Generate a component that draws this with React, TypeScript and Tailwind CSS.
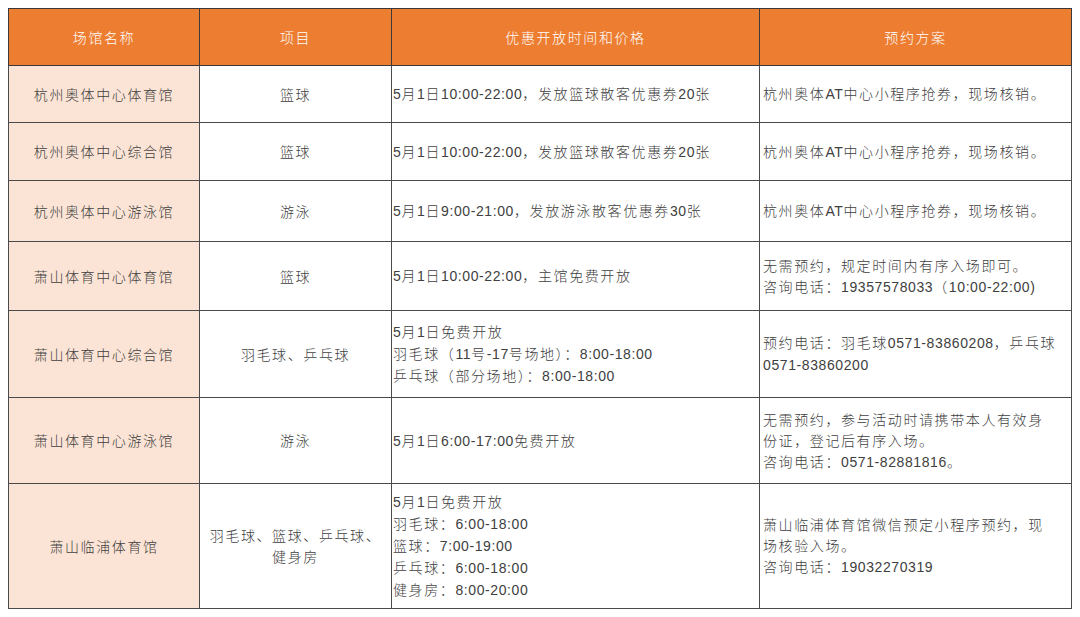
const venues = [
  {
    name: "杭州奥体中心体育馆",
    sport: ["篮球"],
    time: ["5月1日10:00-22:00，发放篮球散客优惠券20张"],
    plan: ["杭州奥体AT中心小程序抢券，现场核销。"],
    h: "h-[57px]",
  },
  {
    name: "杭州奥体中心综合馆",
    sport: ["篮球"],
    time: ["5月1日10:00-22:00，发放篮球散客优惠券20张"],
    plan: ["杭州奥体AT中心小程序抢券，现场核销。"],
    h: "h-[58px]",
  },
  {
    name: "杭州奥体中心游泳馆",
    sport: ["游泳"],
    time: ["5月1日9:00-21:00，发放游泳散客优惠券30张"],
    plan: ["杭州奥体AT中心小程序抢券，现场核销。"],
    h: "h-[61px]",
  },
  {
    name: "萧山体育中心体育馆",
    sport: ["篮球"],
    time: ["5月1日10:00-22:00，主馆免费开放"],
    plan: ["无需预约，规定时间内有序入场即可。", "咨询电话：19357578033（10:00-22:00)"],
    h: "h-[69px]",
  },
  {
    name: "萧山体育中心综合馆",
    sport: ["羽毛球、乒乓球"],
    time: ["5月1日免费开放", "羽毛球（11号-17号场地）：8:00-18:00", "乒乓球（部分场地）：8:00-18:00"],
    plan: ["预约电话：羽毛球0571-83860208，乒乓球", "0571-83860200"],
    h: "h-[87px]",
  },
  {
    name: "萧山体育中心游泳馆",
    sport: ["游泳"],
    time: ["5月1日6:00-17:00免费开放"],
    plan: ["无需预约，参与活动时请携带本人有效身", "份证，登记后有序入场。", "咨询电话：0571-82881816。"],
    h: "h-[86px]",
  },
  {
    name: "萧山临浦体育馆",
    sport: ["羽毛球、篮球、乒乓球、", "健身房"],
    time: ["5月1日免费开放", "羽毛球：6:00-18:00", "篮球：7:00-19:00", "乒乓球：6:00-18:00", "健身房：8:00-20:00"],
    plan: ["萧山临浦体育馆微信预定小程序预约，现", "场核验入场。", "咨询电话：19032270319"],
    h: "h-[125px]",
  },
];

// latin runs get a narrower face than the CJK text around them
function Mixed({ text }: { text: string }) {
  const parts = text.split(/([0-9A-Za-z:\-()]+)/);
  return (
    <>
      {parts.map((p, i) =>
        i % 2 === 1 ? (
          <span key={i} className="font-['Liberation_Sans',sans-serif] tracking-[0.6px]">
            {p}
          </span>
        ) : (
          p
        )
      )}
    </>
  );
}

function Lines({ lines }: { lines: string[] }) {
  return (
    <>
      {lines.map((l, i) => (
        <div key={i} className="whitespace-nowrap">
          <Mixed text={l} />
        </div>
      ))}
    </>
  );
}

export default function App() {
  return (
    <div className="w-[1080px] h-[617px] bg-white pl-2 pt-2 font-['Noto_Sans_CJK_SC',sans-serif] font-light text-[14px] leading-[21px] tracking-[1.6px] text-[#404040]">
      <table className="border-collapse border border-[#262626] table-fixed w-[1063px]">
        <colgroup>
          <col className="w-[191px]" />
          <col className="w-[192px]" />
          <col className="w-[368px]" />
          <col className="w-[312px]" />
        </colgroup>
        <thead>
          <tr className="h-[57px] bg-[#ed7d31] text-white">
            <th className="border border-[#3a3a3a] font-light text-center">场馆名称</th>
            <th className="border border-[#3a3a3a] font-light text-center">项目</th>
            <th className="border border-[#3a3a3a] font-light text-center">优惠开放时间和价格</th>
            <th className="border border-[#3a3a3a] font-light text-center">预约方案</th>
          </tr>
        </thead>
        <tbody>
          {venues.map((v) => (
            <tr key={v.name} className={v.h}>
              <td className="border border-[#4a4a4a] bg-[#fbe4d5] text-center align-middle">{v.name}</td>
              <td className="border border-[#4a4a4a] text-center align-middle">
                <Lines lines={v.sport} />
              </td>
              <td className="border border-[#4a4a4a] pl-[1px] align-middle">
                <Lines lines={v.time} />
              </td>
              <td className="border border-[#4a4a4a] pl-[3px] align-middle">
                <Lines lines={v.plan} />
              </td>
            </tr>
          ))}
        </tbody>
      </table>
    </div>
  );
}
